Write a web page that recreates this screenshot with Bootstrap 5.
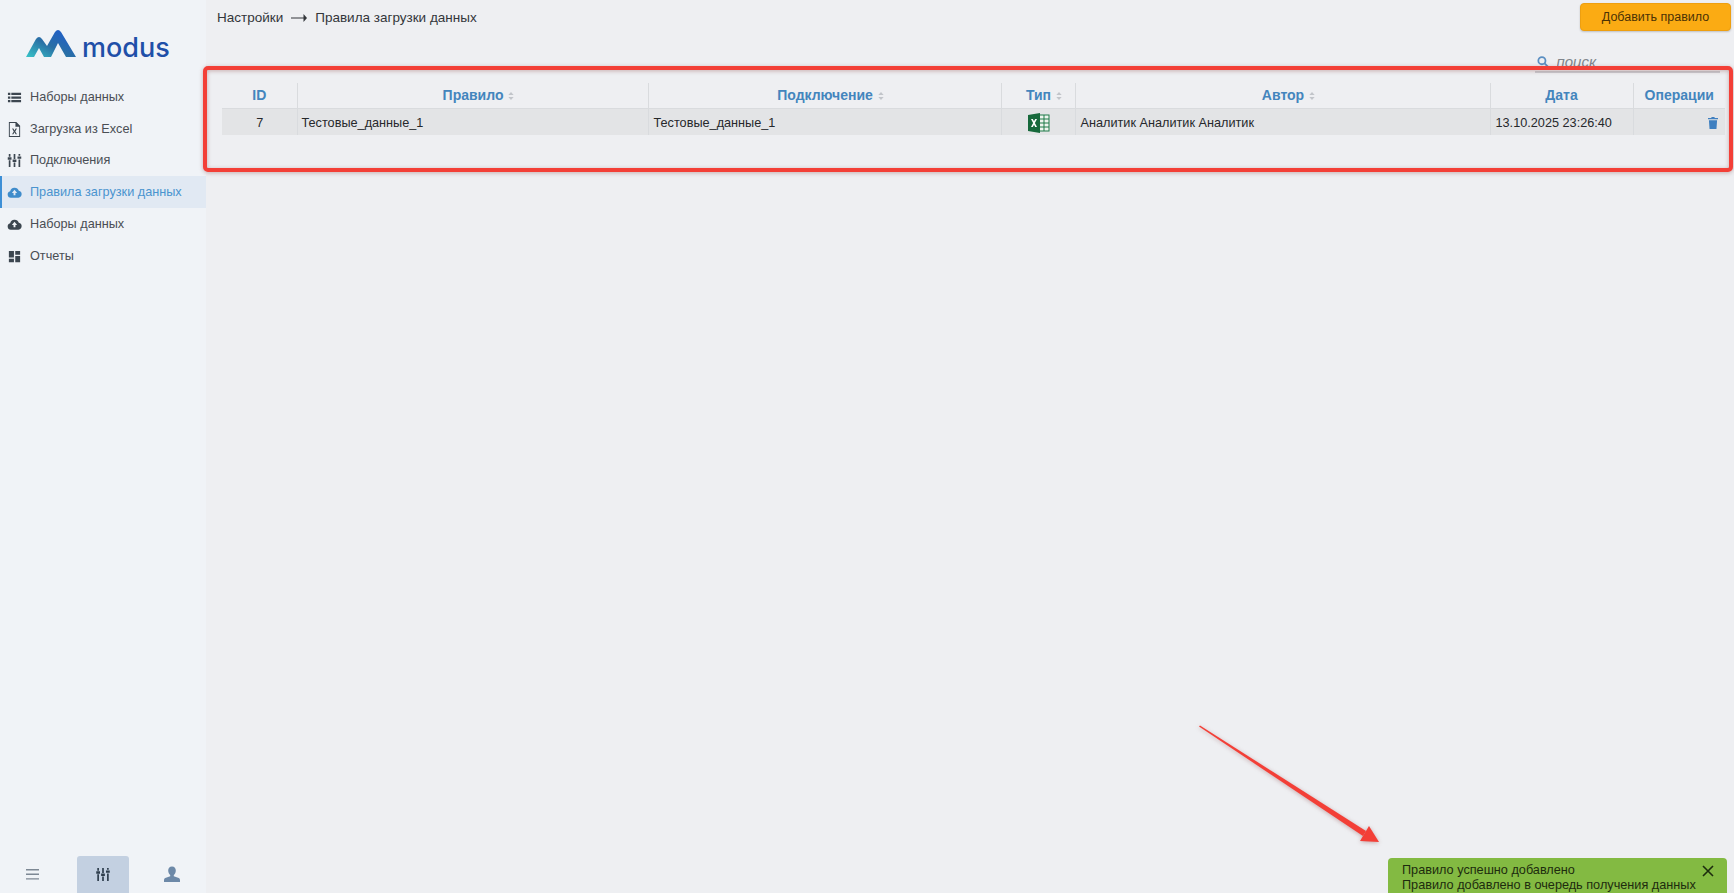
<!DOCTYPE html>
<html lang="ru">

<head>
    <meta charset="utf-8">
    <title>Правила загрузки данных</title>
    <link href="https://cdn.jsdelivr.net/npm/bootstrap@5.3.0/dist/css/bootstrap.min.css" rel="stylesheet">
    <style>
        body {
            background-color: #eeeff2;
            font-family: "Liberation Sans", Arial, sans-serif;
            font-size: 12.7px;
            color: #26282b;
        }

        .app-shell {
            height: 893px;
            overflow: hidden;
            position: relative;
        }

        .side-panel {
            width: 206px;
            background-color: #f0f3f7;
        }

        .logo-box {
            height: 81px;
            padding: 29px 0 0 26px;
            gap: 6px;
        }

        .logo-word {
            font-family: Inter, sans-serif;
            font-size: 27px;
            font-weight: 500;
            line-height: 30px;
            color: #1f4fa8;
            padding-top: 4px;
        }

        .side-link {
            height: 31.8px;
            padding: 1px 0 0 7px;
            gap: 8px;
            color: #4a4e54;
            text-decoration: none;
            border-left: 2px solid transparent;
        }

        .side-link svg {
            width: 15px;
            height: 15px;
            margin-left: -2px;
            fill: #3c4650;
            flex-shrink: 0;
        }

        .side-link.current {
            background-color: #e1e9f3;
            border-left-color: #3d8fd6;
            color: #4a94cf;
        }

        .side-link.current svg {
            fill: #3f8ccb;
        }

        .side-foot {
            height: 37px;
        }

        .foot-btn {
            width: 52px;
            height: 37px;
            border-radius: 3px 3px 0 0;
        }

        .foot-btn.current {
            background-color: #c3d0e1;
        }

        .foot-menu {
            width: 56px;
            margin-left: 4px;
        }

        .foot-user {
            margin-right: 8px;
        }

        .main-area {
            min-width: 0;
        }

        .top-line {
            height: 34px;
            padding: 3px 3px 0 11px;
        }

        .crumbs {
            color: #33363a;
            font-size: 13.5px;
            gap: 8px;
            padding-top: 5px;
        }

        .add-btn {
            width: 151px;
            height: 28px;
            padding: 0;
            font-size: 12.5px;
            color: #4b3205;
            background-color: #fbab13;
            border: 1px solid #ee9f10;
            border-radius: 4px;
            box-shadow: 0 1px 2px rgba(0, 0, 0, .2);
        }

        .search-line {
            height: 48px;
            padding-right: 14px;
        }

        .search-box {
            width: 185px;
            height: 24px;
            margin-top: 15px;
            gap: 7px;
            padding: 4px 0 0 2px;
            border-bottom: 2px solid #c9ccd1;
        }

        .search-field {
            border: 0;
            border-radius: 0;
            background: transparent;
            padding: 0;
            font-size: 15px;
            font-style: italic;
            box-shadow: none;
        }

        .search-field::placeholder {
            color: #80858c;
        }

        .rule-table-wrap {
            padding: 1px 9px 0 16px;
        }

        .rule-table {
            table-layout: fixed;
            width: 1503px;
            margin: 0;
            --bs-table-bg: transparent;
        }

        .rule-table th:nth-child(1) { width: 75px; }
        .rule-table th:nth-child(2) { width: 351px; }
        .rule-table th:nth-child(3) { width: 353px; }
        .rule-table th:nth-child(4) { width: 74px; }
        .rule-table th:nth-child(5) { width: 415px; }
        .rule-table th:nth-child(6) { width: 143px; }
        .rule-table th:nth-child(7) { width: 92px; }

        .rule-table th {
            height: 25px;
            padding: 0;
            text-align: center;
            vertical-align: middle;
            color: #4385bd;
            font-size: 14px;
            font-weight: 700;
            border-bottom: 1px solid #d9dbde;
            border-right: 1px solid #d9dbde;
        }

        .rule-table th.sortable {
            padding-left: 12px;
        }

        .rule-table th:last-child,
        .rule-table td:last-child {
            border-right: 0;
        }

        .rule-table td {
            height: 27px;
            padding: 3px 4px 0 5px;
            vertical-align: middle;
            background-color: #e3e4e6;
            border-bottom: 0;
            border-right: 1px solid #d9dbde;
            font-size: 12.7px;
            color: #26282b;
        }

        .rule-table td.rule-name {
            padding-left: 4px;
        }

        .sort-mark {
            width: 6px;
            height: 8px;
            margin-left: 5px;
            fill: #c2c5ca;
        }

        .trash-icon {
            width: 10px;
            height: 12px;
            fill: #3f7fc0;
            margin-right: 3px;
        }

        .notice-box {
            position: absolute;
            left: 1388px;
            top: 858px;
            width: 339px;
            height: 50px;
            padding: 5px 14px;
            border-radius: 4px;
            background-color: #83ba42;
            color: #1d2c0e;
            line-height: 15px;
        }

        .notice-close {
            position: absolute;
            right: 12px;
            top: 6px;
            width: 14px;
            height: 14px;
        }

        .note-layer {
            position: absolute;
            left: 0;
            top: 0;
            pointer-events: none;
            filter: drop-shadow(0 1px 2px rgba(120, 40, 40, .35));
        }
    </style>
</head>

<body>
    <div class="app-shell d-flex">
        <aside class="side-panel d-flex flex-column">
            <div class="logo-box d-flex align-items-start">
                <svg width="50" height="30" viewBox="0 0 50 30">
                    <defs>
                        <linearGradient id="logoGrad" x1="0" x2="1" y1="1" y2="0">
                            <stop offset="0" stop-color="#38c4c8" />
                            <stop offset="0.45" stop-color="#2a6fa5" />
                            <stop offset="1" stop-color="#1c58d4" />
                        </linearGradient>
                    </defs>
                    <path fill="url(#logoGrad)" d="M0 28 L10 10 Q13 6 16 10 L21 17 L29 3 Q32 -1 35 3 L50 28 L40 28 L32 14 L25 28 L18 28 L13 19 L8 28 Z" />
                </svg>
                <span class="logo-word">modus</span>
            </div>

            <nav class="d-flex flex-column flex-grow-1">
                <a class="side-link d-flex align-items-center" href="#">
                    <svg viewBox="0 0 16 16"><path d="M1 3h2.600v2.400H1zM4.600 3H15v2.400H4.600zM1 6.800h2.600v2.400H1zM4.600 6.800H15v2.400H4.600zM1 10.600h2.600V13H1zM4.600 10.600H15V13H4.600z" /></svg>
                    <span>Наборы данных</span>
                </a>
                <a class="side-link d-flex align-items-center" href="#">
                    <svg viewBox="0 0 16 16"><path fill-rule="evenodd" d="M2 0h8l4 4v12H2zM3 1v14h10V5H9V1zM5.400 7h1.400L8 9l1.200-2h1.400L8.800 10l1.800 3H9.200L8 11l-1.200 2H5.400l1.800-3z" /></svg>
                    <span>Загрузка из Excel</span>
                </a>
                <a class="side-link d-flex align-items-center" href="#">
                    <svg viewBox="0 0 16 16"><path d="M1.900 1h1.800v3H1.900zM.8 4.600h4v2.600h-4zM1.900 7.800h1.800V15H1.900zM7.100 1h1.800v5.500H7.100zM6 7h4v2.600H6zM7.100 10.200h1.800V15H7.100zM12.300 1h1.800v2h-1.800zM11.200 3.600h4v2.600h-4zM12.300 6.800h1.800V15h-1.800z" /></svg>
                    <span>Подключения</span>
                </a>
                <a class="side-link current d-flex align-items-center" href="#">
                    <svg viewBox="0 0 16 16"><path fill-rule="evenodd" d="M4 13.500A3.500 3.500 0 0 1 3.400 6.600 4.800 4.800 0 0 1 12.600 6a3.800 3.800 0 0 1-.4 7.500zM8 5 5.200 8.400H7V11h2V8.400h1.800z" /></svg>
                    <span>Правила загрузки данных</span>
                </a>
                <a class="side-link d-flex align-items-center" href="#">
                    <svg viewBox="0 0 16 16"><path fill-rule="evenodd" d="M4 13.500A3.500 3.500 0 0 1 3.400 6.600 4.800 4.800 0 0 1 12.600 6a3.800 3.800 0 0 1-.4 7.500zM8 5 5.200 8.400H7V11h2V8.400h1.800z" /></svg>
                    <span>Наборы данных</span>
                </a>
                <a class="side-link d-flex align-items-center" href="#">
                    <svg viewBox="0 0 16 16"><path d="M2 2h5.400v7H2zM8.800 2H14v4H8.800zM8.800 7.400H14V14H8.800zM2 10.400h5.400V14H2z" /></svg>
                    <span>Отчеты</span>
                </a>
            </nav>

            <div class="side-foot d-flex justify-content-between">
                <div class="foot-btn foot-menu d-flex align-items-center justify-content-center">
                    <svg width="15" height="13" viewBox="0 0 15 13" fill="#7d8894"><path d="M1 1h13v1.400H1zM1 5.600h13V7H1zM1 10.200h13v1.400H1z" /></svg>
                </div>
                <div class="foot-btn current d-flex align-items-center justify-content-center">
                    <svg width="16" height="15" viewBox="0 0 16 16" fill="#2f3e4d"><path d="M1.900 1h1.800v3H1.900zM.8 4.600h4v2.600h-4zM1.900 7.800h1.800V15H1.900zM7.100 1h1.800v5.500H7.100zM6 7h4v2.600H6zM7.100 10.200h1.800V15H7.100zM12.300 1h1.800v2h-1.800zM11.200 3.600h4v2.600h-4zM12.300 6.800h1.800V15h-1.800z" /></svg>
                </div>
                <div class="foot-btn foot-user d-flex align-items-center justify-content-center">
                    <svg width="16" height="17" viewBox="0 0 16 17" fill="#6d89a8"><path d="M8 .5c2.600 0 3.800 1.800 3.800 4 0 2-1 3.600-2 4.400v1.300l5 1.800q1.200.5 1.200 2V16H0v-2q0-1.500 1.200-2l5-1.800V8.900c-1-.8-2-2.400-2-4.400 0-2.200 1.200-4 3.800-4z" /></svg>
                </div>
            </div>
        </aside>

        <main class="main-area flex-grow-1">
            <div class="top-line d-flex justify-content-between align-items-start">
                <div class="crumbs d-flex align-items-center">
                    <span>Настройки</span>
                    <svg width="16" height="8" viewBox="0 0 16 8"><path d="M0 3.500h12.500V0L16 4l-3.500 4V4.500H0z" fill="#33363a" /></svg>
                    <span>Правила загрузки данных</span>
                </div>
                <button type="button" class="btn add-btn">Добавить правило</button>
            </div>

            <div class="search-line d-flex justify-content-end">
                <div class="search-box d-flex align-items-center">
                    <svg width="14" height="14" viewBox="0 0 14 14" fill="none" stroke="#5b8fc2" stroke-width="2"><circle cx="5.500" cy="5.500" r="4" /><path d="M8.500 8.500 13 13" /></svg>
                    <input type="text" class="form-control search-field" placeholder="поиск">
                </div>
            </div>

            <div class="rule-table-wrap">
                <table class="table rule-table">
                    <thead>
                        <tr>
                            <th>ID</th>
                            <th class="sortable">Правило<svg class="sort-mark" viewBox="0 0 6 9"><path d="M3 0l3 3.500H0zM3 9 0 5.500h6z" /></svg></th>
                            <th class="sortable">Подключение<svg class="sort-mark" viewBox="0 0 6 9"><path d="M3 0l3 3.500H0zM3 9 0 5.500h6z" /></svg></th>
                            <th class="sortable">Тип<svg class="sort-mark" viewBox="0 0 6 9"><path d="M3 0l3 3.500H0zM3 9 0 5.500h6z" /></svg></th>
                            <th class="sortable">Автор<svg class="sort-mark" viewBox="0 0 6 9"><path d="M3 0l3 3.500H0zM3 9 0 5.500h6z" /></svg></th>
                            <th>Дата</th>
                            <th>Операции</th>
                        </tr>
                    </thead>
                    <tbody>
                        <tr>
                            <td class="text-center">7</td>
                            <td class="rule-name">Тестовые_данные_1</td>
                            <td>Тестовые_данные_1</td>
                            <td class="text-center">
                                <svg width="22" height="20" viewBox="0 0 22 20" class="d-block mx-auto">
                                    <rect x="8" y="2" width="13" height="16" fill="#eef5ef" stroke="#1f7a48" stroke-width="1" />
                                    <path d="M11 2v16M16 2v16M8 6h13M8 10h13M8 14h13" stroke="#1f7a48" stroke-width="1" />
                                    <path d="M0 2 12 0v20L0 18z" fill="#17693c" />
                                    <path d="M3 6h1.800L6 8.300 7.200 6H9L6.900 10 9 14H7.200L6 11.700 4.800 14H3l2.100-4z" fill="#fff" />
                                </svg>
                            </td>
                            <td>Аналитик Аналитик Аналитик</td>
                            <td>13.10.2025 23:26:40</td>
                            <td class="text-end">
                                <svg class="trash-icon" viewBox="0 0 11 13"><path d="M4 0h3l.5 1H11v1.500H0V1h3.500zM1 3.500h9l-.7 9.500H1.700z" /></svg>
                            </td>
                        </tr>
                    </tbody>
                </table>
            </div>
        </main>

        <div class="notice-box">
            <div>Правило успешно добавлено</div>
            <div>Правило добавлено в очередь получения данных</div>
            <svg class="notice-close" viewBox="0 0 14 14" stroke="#1d2c0e" stroke-width="1.600"><path d="M2 2l10 10M12 2 2 12" /></svg>
        </div>

        <svg class="note-layer" width="1734" height="893" viewBox="0 0 1734 893">
            <rect x="205" y="68" width="1526" height="102" rx="3" fill="none" stroke="#f33f37" stroke-width="4" />
            <path d="M1199 726.500 1200 725.500 1366 831 1363 836z" fill="#f33f37" />
            <path d="M1379 842 1360 841 1369 826z" fill="#f33f37" />
        </svg>
    </div>

    <script src="https://cdn.jsdelivr.net/npm/bootstrap@5.3.0/dist/js/bootstrap.bundle.min.js"></script>
</body>

</html>
